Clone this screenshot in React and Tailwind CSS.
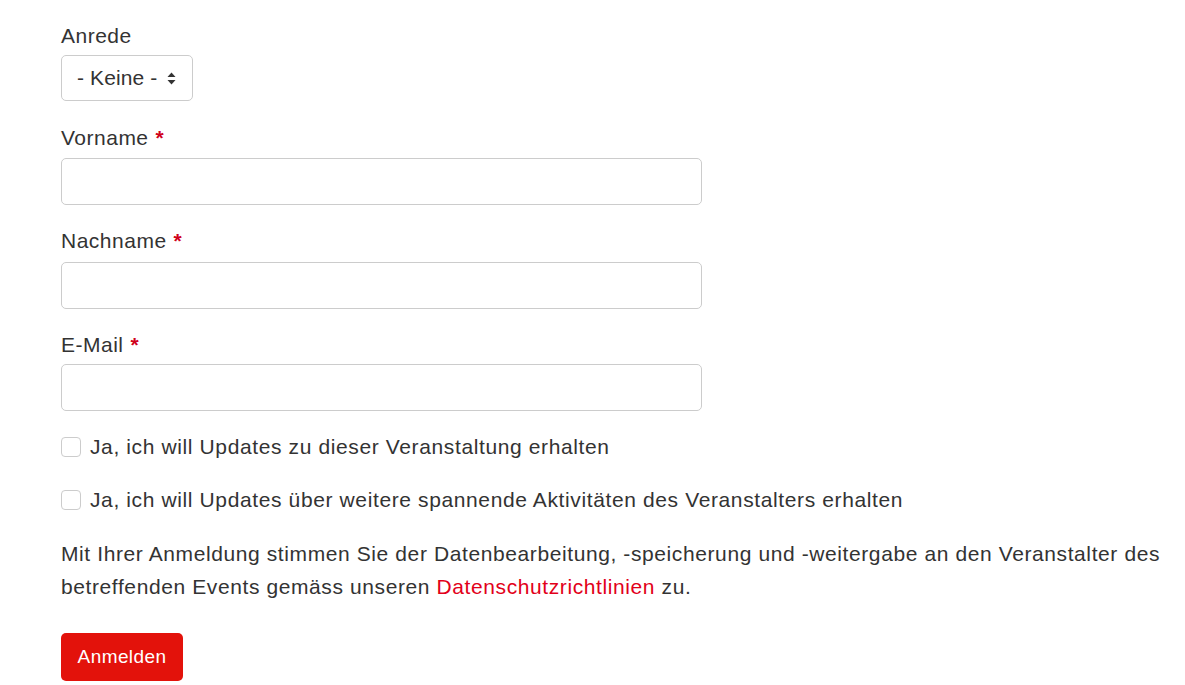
import { useState } from "react";

function Label({ children, required, className = "mb-[7px]" }) {
  return (
    <label className={`block text-[21px] leading-[28px] tracking-[0.5px] text-[#333] ${className}`}>
      {children}
      {required && <span className="text-[#d0021b] ml-[7px] font-bold">*</span>}
    </label>
  );
}

function TextInput() {
  return (
    <input
      type="text"
      className="block w-[641px] h-[47px] rounded-[5px] border border-[#ccc] bg-white px-3 text-[20px] outline-none"
    />
  );
}

function Check({ children }) {
  const [checked, setChecked] = useState(false);
  return (
    <label className="flex items-center h-[30px] text-[21px] tracking-[0.62px] text-[#333] cursor-pointer">
      <span
        onClick={() => setChecked(!checked)}
        className="w-[20px] h-[20px] rounded-[4px] border border-[#ccc] bg-white mr-[9px] shrink-0"
      />
      {children}
    </label>
  );
}

export default function App() {
  return (
    <div className="bg-white min-h-[685px] pl-[61px] pt-[22px] font-['Helvetica_Neue','Liberation_Sans',Arial,sans-serif]">
      <Label className="mb-[5px]">Anrede</Label>
      <div className="flex items-center w-[132px] h-[46px] rounded-[5px] border border-[#ccc] pl-[15px] text-[21px] tracking-[0.1px] text-[#333]">
        <span>- Keine -</span>
        <svg className="ml-[10px]" width="9" height="13" viewBox="0 0 9 13">
          <path d="M4.5 0.5 L8.5 5 H0.5 Z" fill="#333" />
          <path d="M4.5 12.5 L8.5 8 H0.5 Z" fill="#333" />
        </svg>
      </div>

      <div className="mt-[23px]">
        <Label required className="mb-[6px]">Vorname</Label>
        <TextInput />
      </div>
      <div className="mt-[22px]">
        <Label required>Nachname</Label>
        <TextInput />
      </div>
      <div className="mt-[22px]">
        <Label required className="mb-[5px]">E-Mail</Label>
        <TextInput />
      </div>

      <div className="mt-[21px] flex flex-col gap-[23px]">
        <Check>Ja, ich will Updates zu dieser Veranstaltung erhalten</Check>
        <Check>Ja, ich will Updates über weitere spannende Aktivitäten des Veranstalters erhalten</Check>
      </div>

      <p className="mt-[22px] text-[21px] leading-[33px] tracking-[0.6px] text-[#333] w-[1115px]">
        Mit Ihrer Anmeldung stimmen Sie der Datenbearbeitung, -speicherung und -weitergabe an den Veranstalter des betreffenden Events gemäss unseren{" "}
        <a className="text-[#e2001a]">Datenschutzrichtlinien</a> zu.
      </p>

      <button className="mt-[30px] h-[48px] w-[122px] rounded-[5px] bg-[#e3120b] text-white text-[19px] tracking-[0.4px]">
        Anmelden
      </button>
    </div>
  );
}
